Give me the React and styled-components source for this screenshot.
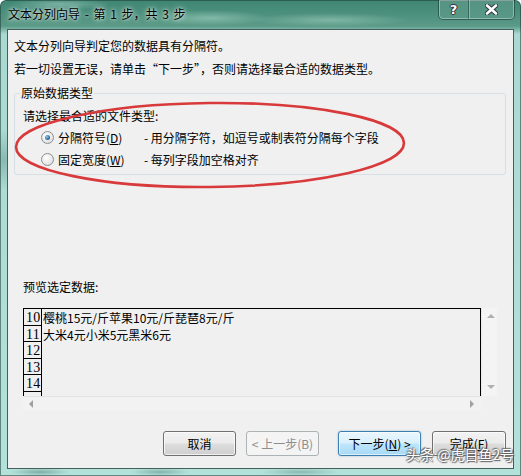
import React from "react";
import styled, { createGlobalStyle, css } from "styled-components";

const Global = createGlobalStyle`
  html, body { margin: 0; padding: 0; width: 521px; height: 476px; overflow: hidden; background: #fff; }
  #root { width: 521px; height: 476px; }
  * { box-sizing: border-box; }
`;

const UI = `"Noto Sans CJK SC", "Microsoft YaHei", sans-serif`;

const Window = styled.div`
  position: relative;
  width: 521px;
  height: 476px;
  display: flex;
  flex-direction: column;
  padding: 0 7px 7px 7px;
  border-radius: 6px 6px 0 0;
  background:
    radial-gradient(ellipse 60px 8px at 210px 18px, rgba(190, 230, 215, 0.45), transparent),
    radial-gradient(ellipse 80px 7px at 330px 20px, rgba(190, 230, 215, 0.4), transparent),
    radial-gradient(ellipse 50px 6px at 60px 4px, rgba(200, 235, 225, 0.4), transparent),
    radial-gradient(ellipse 30px 4px at 40px 472px, rgba(60, 110, 100, 0.45), transparent),
    radial-gradient(ellipse 30px 4px at 160px 472px, rgba(60, 110, 100, 0.4), transparent),
    radial-gradient(ellipse 40px 4px at 300px 472px, rgba(60, 110, 100, 0.35), transparent),
    radial-gradient(ellipse 20px 30px at 4px 160px, rgba(70, 120, 110, 0.35), transparent),
    linear-gradient(180deg, #3f8671 0px, #4a8f7b 12px, #5a9a87 26px, #a9d9d1 34px, #b3e2da 100%);
  box-shadow: inset 0 0 0 1px rgba(30, 60, 55, 0.55);
`;

const TitleBar = styled.div`
  height: 29px;
  display: flex;
  align-items: flex-start;
  flex-shrink: 0;
`;

const Title = styled.div`
  padding: 6px 0 0 1px;
  font-family: ${UI};
  font-size: 12px;
  line-height: 16px;
  color: #000;
  word-spacing: 2px;
  text-shadow: 0 0 6px rgba(255, 255, 255, 0.9), 0 0 3px rgba(255, 255, 255, 0.8);
  white-space: pre;
`;

const CaptionGroup = styled.div`
  margin-left: auto;
  margin-right: -1px;
  display: flex;
  height: 20px;
  border: 1px solid rgba(20, 50, 45, 0.55);
  border-top: none;
  border-radius: 0 0 5px 5px;
  box-shadow: inset 0 0 0 1px rgba(255, 255, 255, 0.35);
  overflow: hidden;
`;

const CaptionBtn = styled.div`
  width: ${(p) => p.$w}px;
  height: 100%;
  display: flex;
  align-items: center;
  justify-content: center;
  background: linear-gradient(180deg, rgba(255, 255, 255, 0.12), rgba(255, 255, 255, 0.04));
  & + & {
    border-left: 1px solid rgba(20, 50, 45, 0.45);
    box-shadow: inset 1px 0 0 rgba(255, 255, 255, 0.3);
  }
`;

const HelpGlyph = styled.span`
  font-family: "DejaVu Sans", sans-serif;
  font-weight: bold;
  font-size: 13px;
  line-height: 1;
  color: #fff;
  text-shadow: 0 0 1px #223, 1px 0 0 #334, -1px 0 0 #334, 0 1px 0 #334, 0 -1px 0 #334;
`;

const Client = styled.div`
  position: relative;
  flex: 1;
  display: flex;
  flex-direction: column;
  background: #f0f0f0;
  border: 1px solid #45605a;
  font-family: ${UI};
  font-size: 12px;
  color: #000;
`;

const Line = styled.div`
  line-height: 20px;
  padding-left: 6px;
  margin-top: ${(p) => p.$mt || 0}px;
  white-space: nowrap;
`;

const GroupBox = styled.fieldset`
  margin: 6px 7px 0 6px;
  padding: 0 0 5px 5px;
  border: 1px solid #d5dfe5;
  border-radius: 3px;
  min-width: 0;
`;

const GroupLegend = styled.legend`
  padding: 0 1px;
  line-height: 16px;
  font-size: 12px;
`;

const Prompt = styled.div`
  line-height: 20px;
  padding-left: 3px;
  margin-top: 5px;
`;

const RadioRow = styled.div`
  display: grid;
  grid-template-columns: 13px 82px auto;
  column-gap: 4px;
  align-items: center;
  height: 20px;
  padding-left: 21px;
  margin-top: ${(p) => p.$mt || 0}px;
`;

const RadioCircle = styled.span`
  width: 13px;
  height: 13px;
  border-radius: 50%;
  border: 1px solid #8c8f91;
  background: radial-gradient(circle at 40% 35%, #ffffff, #e3e3e3 70%, #d2d2d2);
  display: flex;
  align-items: center;
  justify-content: center;
  ${(p) =>
    p.$checked &&
    css`
      &::after {
        content: "";
        width: 5px;
        height: 5px;
        border-radius: 50%;
        background: radial-gradient(circle at 35% 35%, #8fc3ea, #1e5b8c 75%);
      }
    `}
`;

const Desc = styled.span`
  white-space: nowrap;
`;

const PreviewLabel = styled.div`
  line-height: 20px;
  padding-left: 15px;
  margin-top: 102px;
`;

const Preview = styled.div`
  margin: 11px 16px 0 15px;
  display: grid;
  grid-template-columns: 1fr 16px;
  grid-template-rows: 88px 15px;
`;

const DataGrid = styled.div`
  border: 1px solid #000;
  border-bottom: none;
  overflow: hidden;
  background: #f0f0f0;
  display: flex;
  flex-direction: column;
`;

const DataRow = styled.div`
  display: flex;
  height: 16.5px;
  flex-shrink: 0;
`;

const RowNum = styled.div`
  width: 18px;
  flex-shrink: 0;
  border-right: 1px solid #000;
  border-bottom: 1px solid #000;
  font-family: "Liberation Serif", serif;
  font-size: 14px;
  line-height: 14px;
  padding: 2px 0 0 2px;
  letter-spacing: 0.3px;
`;

const RowText = styled.div`
  padding-left: 1px;
  font-size: 12px;
  line-height: 17px;
  white-space: nowrap;
`;

const VScroll = styled.div`
  background: #f4f4f4;
  border-left: 1px dotted #e0e0e0;
  display: flex;
  flex-direction: column;
  justify-content: space-between;
  align-items: center;
  padding: 6px 0 7px 2px;
`;

const HScroll = styled.div`
  background: #f2f2f2;
  border-top: 1px solid #e4e4e4;
  display: flex;
  justify-content: space-between;
  align-items: center;
  padding: 0 7px 0 6px;
`;

const Corner = styled.div`
  background: #f0f0f0;
`;

const Arrow = styled.span`
  width: 0;
  height: 0;
  ${(p) =>
    p.$dir === "up" &&
    css`
      border-left: 4px solid transparent;
      border-right: 4px solid transparent;
      border-bottom: 4px solid #b0b0b0;
    `}
  ${(p) =>
    p.$dir === "down" &&
    css`
      border-left: 4px solid transparent;
      border-right: 4px solid transparent;
      border-top: 4px solid #b0b0b0;
    `}
  ${(p) =>
    p.$dir === "left" &&
    css`
      border-top: 4px solid transparent;
      border-bottom: 4px solid transparent;
      border-right: 4px solid #a0a0a0;
    `}
  ${(p) =>
    p.$dir === "right" &&
    css`
      border-top: 4px solid transparent;
      border-bottom: 4px solid transparent;
      border-left: 4px solid #a0a0a0;
    `}
`;

const ButtonRow = styled.div`
  display: flex;
  justify-content: flex-end;
  margin-top: 20px;
  padding-right: 7px;
`;

const Button = styled.div`
  width: ${(p) => p.$w}px;
  height: 25px;
  margin-left: ${(p) => p.$ml}px;
  border-radius: 3px;
  display: flex;
  align-items: center;
  justify-content: center;
  font-size: 12px;
  white-space: nowrap;
  border: 1px solid #707070;
  background: linear-gradient(180deg, #f2f2f2 0%, #ebebeb 48%, #dddddd 52%, #cfcfcf 100%);
  box-shadow: inset 0 0 0 1px rgba(255, 255, 255, 0.7);
  color: #000;
  ${(p) =>
    p.$variant === "disabled" &&
    css`
      border-color: #adb2b5;
      background: #f4f4f4;
      color: #8d8d8d;
      box-shadow: none;
    `}
  ${(p) =>
    p.$variant === "focus" &&
    css`
      border-color: #3c7fb1;
      background: linear-gradient(180deg, #eaf6fd 0%, #d9f0fc 48%, #bee6fd 52%, #a7d9f5 100%);
      box-shadow: inset 0 0 0 1px rgba(255, 255, 255, 0.6), 0 0 2px rgba(60, 127, 177, 0.5);
    `}
`;

const U = styled.span`
  text-decoration: underline;
`;

const Ellipse = styled.svg`
  position: absolute;
  left: 6px;
  top: 71px;
  pointer-events: none;
  overflow: visible;
`;

const Watermark = styled.div`
  position: absolute;
  left: 406px;
  top: 444px;
  font-family: ${UI};
  font-size: 14px;
  line-height: 20px;
  color: #fff;
  white-space: nowrap;
  text-shadow: 0 0 2px #555, 1px 1px 1px #666, -1px -1px 1px #777;
`;

const rows = [
  { n: "10", t: "樱桃15元/斤苹果10元/斤琵琶8元/斤" },
  { n: "11", t: "大米4元小米5元黑米6元" },
  { n: "12", t: "" },
  { n: "13", t: "" },
  { n: "14", t: "" },
  { n: "", t: "" },
];

export default function App() {
  return (
    <>
      <Global />
      <Window>
        <TitleBar>
          <Title>文本分列向导 - 第 1 步，共 3 步</Title>
          <CaptionGroup>
            <CaptionBtn $w={29}>
              <HelpGlyph>?</HelpGlyph>
            </CaptionBtn>
            <CaptionBtn $w={46}>
              <svg width="13" height="11" viewBox="0 0 13 11">
                <path d="M2 1.5 L11 9.5 M11 1.5 L2 9.5" stroke="#2b3a3a" strokeWidth="4.6" strokeLinecap="round" />
                <path d="M2 1.5 L11 9.5 M11 1.5 L2 9.5" stroke="#ffffff" strokeWidth="2.6" strokeLinecap="round" />
              </svg>
            </CaptionBtn>
          </CaptionGroup>
        </TitleBar>
        <Client>
          <Line $mt={6}>文本分列向导判定您的数据具有分隔符。</Line>
          <Line $mt={3}>若一切设置无误，请单击“下一步”，否则请选择最合适的数据类型。</Line>
          <GroupBox>
            <GroupLegend>原始数据类型</GroupLegend>
            <Prompt>请选择最合适的文件类型:</Prompt>
            <RadioRow $mt={1}>
              <RadioCircle $checked />
              <span>
                分隔符号(<U>D</U>)
              </span>
              <Desc>- 用分隔字符，如逗号或制表符分隔每个字段</Desc>
            </RadioRow>
            <RadioRow $mt={2}>
              <RadioCircle />
              <span>
                固定宽度(<U>W</U>)
              </span>
              <Desc>- 每列字段加空格对齐</Desc>
            </RadioRow>
          </GroupBox>
          <PreviewLabel>预览选定数据:</PreviewLabel>
          <Preview>
            <DataGrid>
              {rows.map((r, i) => (
                <DataRow key={i}>
                  <RowNum>{r.n}</RowNum>
                  <RowText>{r.t}</RowText>
                </DataRow>
              ))}
            </DataGrid>
            <VScroll>
              <Arrow $dir="up" />
              <Arrow $dir="down" />
            </VScroll>
            <HScroll>
              <Arrow $dir="left" />
              <Arrow $dir="right" />
            </HScroll>
            <Corner />
          </Preview>
          <ButtonRow>
            <Button $w={73} $ml={0}>取消</Button>
            <Button $w={73} $ml={10} $variant="disabled">&lt; 上一步(B)</Button>
            <Button $w={83} $ml={19} $variant="focus">
              下一步(<U>N</U>) &gt;
            </Button>
            <Button $w={74} $ml={11}>
              完成(<U>F</U>)
            </Button>
          </ButtonRow>
          <Ellipse width="392" height="88" viewBox="0 0 392 88">
            <ellipse
              cx="196"
              cy="44"
              rx="194"
              ry="42"
              fill="none"
              stroke="#d8393b"
              strokeWidth="2.6"
              transform="rotate(-0.6 196 44)"
            />
          </Ellipse>
        </Client>
        <Watermark>头条 @虎目鱼2号</Watermark>
      </Window>
    </>
  );
}
